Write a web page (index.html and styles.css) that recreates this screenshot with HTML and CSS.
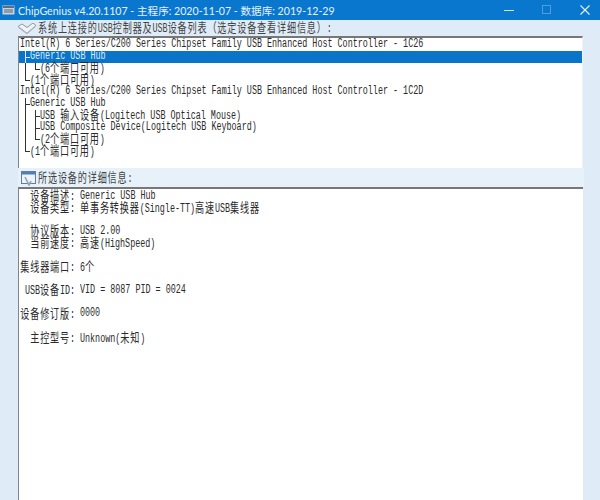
FILE: index.html
```html
<!DOCTYPE html>
<html lang="zh-CN">
<head>
  <meta charset="UTF-8" />
  <title>ChipGenius</title>
  <link rel="stylesheet" href="styles.css">
</head>
<body>

  <div class="titlebar">
    <svg class="app-icon" width="13" height="10" viewBox="0 0 13 10">
      <rect x="0.5" y="0.5" width="12" height="9" fill="#c9d3dc"/>
      <rect x="1" y="1" width="11" height="2" fill="#5b6f82"/>
      <rect x="2" y="4" width="9" height="4" fill="#8c9cab"/>
    </svg>
    <span class="title-text">ChipGenius v4.20.1107 - 主程序: 2020-11-07 - 数据库: 2019-12-29</span>
    <div class="win-buttons">
      <svg width="10" height="10" viewBox="0 0 10 10"><path d="M0 5.5h10" stroke="#cfe4f6" stroke-width="1"/></svg>
      <svg width="10" height="10" viewBox="0 0 10 10"><rect x="0.5" y="0.5" width="8" height="8" fill="none" stroke="#4f9fe0"/></svg>
      <svg width="10" height="10" viewBox="0 0 10 10"><path d="M0.5 0.5l9 9M9.5 0.5l-9 9" stroke="#e4f1fb" stroke-width="1.1"/></svg>
    </div>
  </div>

  <div class="client">
    <div class="group-head top-head">
      <svg class="head-icon" width="18" height="11" viewBox="0 0 18 11">
        <path d="M0 3.5l9 7 9-8-3-2.5-6 4.5-5-3.500z" fill="#f1f4f6" stroke="#7f8d9a" stroke-width="0.9"/>
        <path d="M1 4.500l8 6 8-7" fill="none" stroke="#a9b4be" stroke-width="1.200"/>
      </svg>
      <span class="txt head-text"><b>系统上连接的</b>USB<b>控制器及</b>USB<b>设备列表（选定设备查看详细信息）</b>:</span>
    </div>

    <div class="device-list">
      <div class="row"><span class="txt">Intel(R) 6 Series/C200 Series Chipset Family USB Enhanced Host Controller - 1C26</span></div>
      <div class="row selected"><i class="tree tee"></i><span class="txt">Generic USB Hub</span></div>
      <div class="row"><i class="tree bar"></i><i class="tree end"></i><span class="txt">(6<b>个端口可用</b>)</span></div>
      <div class="row"><i class="tree end"></i><span class="txt">(1<b>个端口可用</b>)</span></div>
      <div class="row"><span class="txt">Intel(R) 6 Series/C200 Series Chipset Family USB Enhanced Host Controller - 1C2D</span></div>
      <div class="row"><i class="tree tee"></i><span class="txt">Generic USB Hub</span></div>
      <div class="row"><i class="tree bar"></i><i class="tree tee"></i><span class="txt">USB <b>输入设备</b>(Logitech USB Optical Mouse)</span></div>
      <div class="row"><i class="tree bar"></i><i class="tree tee"></i><span class="txt">USB Composite Device(Logitech USB Keyboard)</span></div>
      <div class="row"><i class="tree bar"></i><i class="tree end"></i><span class="txt">(2<b>个端口可用</b>)</span></div>
      <div class="row"><i class="tree end"></i><span class="txt">(1<b>个端口可用</b>)</span></div>
    </div>

    <div class="group-head">
      <svg class="head-icon info-icon" width="15" height="15" viewBox="0 0 15 15">
        <rect x="0.5" y="0.5" width="14" height="12" fill="#eef3f8" stroke="#5f7ea0"/>
        <rect x="1" y="1" width="13" height="2.5" fill="#4f7fb5"/>
        <path d="M4 6l4 8 2-4" fill="none" stroke="#8fa3b5" stroke-width="1.6"/>
      </svg>
      <span class="txt head-text"><b>所选设备的详细信息</b>:</span>
    </div>

    <div class="details">
      <div class="row"><span class="txt lbl"><b>设备描述</b>:</span><span class="txt">Generic USB Hub</span></div>
      <div class="row"><span class="txt lbl"><b>设备类型</b>:</span><span class="txt"><b>单事务转换器</b>(Single-TT)<b>高速</b>USB<b>集线器</b></span></div>
      <div class="row"></div>
      <div class="row"><span class="txt lbl"><b>协议版本</b>:</span><span class="txt">USB 2.00</span></div>
      <div class="row"><span class="txt lbl"><b>当前速度</b>:</span><span class="txt"><b>高速</b>(HighSpeed)</span></div>
      <div class="row"></div>
      <div class="row"><span class="txt lbl"><b>集线器端口</b>:</span><span class="txt">6<b>个</b></span></div>
      <div class="row"></div>
      <div class="row"><span class="txt lbl">USB<b>设备</b>ID:</span><span class="txt">VID = 8087 PID = 0024</span></div>
      <div class="row"></div>
      <div class="row"><span class="txt lbl"><b>设备修订版</b>:</span><span class="txt">0000</span></div>
      <div class="row"></div>
      <div class="row"><span class="txt lbl"><b>主控型号</b>:</span><span class="txt">Unknown(<b>未知</b>)</span></div>
    </div>
  </div>

</body>
</html>
```

FILE: styles.css
```css
/* --- Window --- */
html, body {
  height: 100%;
  margin: 0;
}
body {
  width: 600px;
  height: 500px;
  overflow: hidden;
  display: flex;
  flex-direction: column;
  background: #dfecf8;
  font-family: "Liberation Mono", "Noto Sans CJK SC", monospace;
  color: #2a2a2a;
}

/* --- Title bar --- */
.titlebar {
  height: 20px;
  flex-shrink: 0;
  display: flex;
  align-items: center;
  background: #0a77cf;
  color: #e6f2fb;
  padding-left: 2px;
}
.app-icon {
  margin-right: 3px;
}
.title-text {
  font-family: Lato, "Noto Sans CJK SC", sans-serif;
  font-size: 10.6px;
  white-space: nowrap;
}
.win-buttons {
  margin-left: auto;
  margin-right: 10px;
  display: flex;
  gap: 28px;
}

/* --- Main area --- */
.client {
  flex-grow: 1;
  min-height: 0;
  display: flex;
  flex-direction: column;
  padding: 0 17px 0 18px;
}
.group-head {
  height: 19px;
  flex-shrink: 0;
  box-sizing: border-box;
  padding-top: 1px;
  display: flex;
  align-items: center;
  background: #e6f1fa;
  margin-right: -1px;
}
.top-head {
  height: 16px;
  background: none;
}
.head-icon {
  margin-right: 2px;
  flex-shrink: 0;
}
.info-icon {
  margin-left: 3px;
  margin-right: 2px;
}
.head-text {
  color: #444;
  white-space: nowrap;
}

/* --- Device list and details --- */
.device-list, .details {
  background: #fff;
  border-left: 1px solid #80868c;
  border-top: 2px solid #777;
  box-sizing: border-box;
}
.device-list {
  height: 132px;
  flex-shrink: 0;
  border-right: 1px solid #eef3f8;
  padding-left: 1px;
  padding-top: 1px;
}
.details {
  flex-grow: 1;
  min-height: 0;
  padding-top: 1.500px;
  padding-left: 1px;
}
.row {
  height: 11.8px;
  display: flex;
  align-items: center;
  white-space: nowrap;
}
.selected {
  background: #0a74c9;
  color: #d9ebf9;
  margin-left: -1px;
  padding-left: 1px;
}

/* narrow, tall text like the bitmap font in the original */
.txt {
  display: inline-block;
  font-size: 12px;
  line-height: 11.8px;
  transform: scaleX(0.7);
  transform-origin: left center;
}
.txt b {
  font-family: "Noto Sans CJK SC", sans-serif;
  font-weight: 400;
  font-size: 13px;
  letter-spacing: 1.2px;
}
.lbl {
  width: 78.6px;
  margin-right: -18.6px;
  text-align: right;
  flex-shrink: 0;
}

/* --- Tree lines --- */
.tree {
  position: relative;
  width: 10px;
  height: 100%;
  flex-shrink: 0;
}
.tree::before, .tree::after {
  content: "";
  position: absolute;
  background: #333;
}
.tree::before {
  left: 5px;
  top: 0;
  width: 1px;
  height: 100%;
}
.tree::after {
  left: 5px;
  top: 6px;
  width: 5px;
  height: 1px;
}
.end::before {
  height: 7px;
}
.bar::after {
  display: none;
}
.selected .tree::before, .selected .tree::after {
  background: #d9ebf9;
}
```
